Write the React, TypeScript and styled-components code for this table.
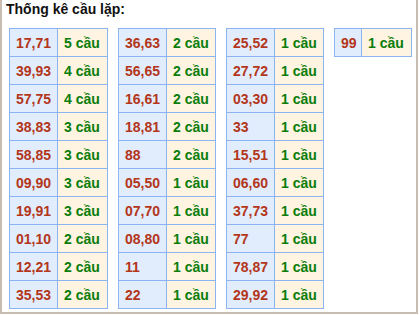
import React from 'react';
import styled, { createGlobalStyle } from 'styled-components';

const GlobalStyle = createGlobalStyle`
  html, body {
    margin: 0;
    padding: 0;
    background: #ffffff;
  }
  body {
    font-family: "Liberation Sans", Arial, sans-serif;
  }
`;

const Box = styled.div`
  box-sizing: border-box;
  width: 418px;
  height: 314px;
  border: 2px solid #c8bdb0;
  border-top: none;
  padding: 1px 0 0 4px;
`;

const Title = styled.div`
  font-size: 14px;
  line-height: 16px;
  font-weight: bold;
  color: #111;
`;

const Tables = styled.div`
  display: flex;
  align-items: flex-start;
  gap: 10px;
  margin: 11px 0 0 3px;
`;

const Grid = styled.div<{ $first: number; $second: number }>`
  display: grid;
  grid-template-columns: ${(p) => `${p.$first}px ${p.$second}px`};
  grid-auto-rows: 27px;
  gap: 1px;
  padding: 1px;
  background: #8db4f2;
`;

const Cell = styled.div<{ $kind: 'num' | 'count' }>`
  display: flex;
  align-items: center;
  padding-left: 6px;
  font-size: 14px;
  font-weight: bold;
  white-space: nowrap;
  background: ${(p) => (p.$kind === 'num' ? '#e1edfd' : '#fef4e1')};
  color: ${(p) => (p.$kind === 'num' ? '#b3361b' : '#0b7d0b')};
`;

type Row = [string, number];

const columns: { first: number; second: number; rows: Row[] }[] = [
  {
    first: 47,
    second: 49,
    rows: [
      ['17,71', 5], ['39,93', 4], ['57,75', 4], ['38,83', 3], ['58,85', 3],
      ['09,90', 3], ['19,91', 3], ['01,10', 2], ['12,21', 2], ['35,53', 2],
    ],
  },
  {
    first: 47,
    second: 48,
    rows: [
      ['36,63', 2], ['56,65', 2], ['16,61', 2], ['18,81', 2], ['88', 2],
      ['05,50', 1], ['07,70', 1], ['08,80', 1], ['11', 1], ['22', 1],
    ],
  },
  {
    first: 47,
    second: 48,
    rows: [
      ['25,52', 1], ['27,72', 1], ['03,30', 1], ['33', 1], ['15,51', 1],
      ['06,60', 1], ['37,73', 1], ['77', 1], ['78,87', 1], ['29,92', 1],
    ],
  },
  {
    first: 26,
    second: 49,
    rows: [['99', 1]],
  },
];

export default function App() {
  return (
    <>
      <GlobalStyle />
      <Box>
        <Title>Thống kê cầu lặp:</Title>
        <Tables>
          {columns.map((col, i) => (
            <Grid key={i} $first={col.first} $second={col.second}>
              {col.rows.map(([pair, n]) => (
                <React.Fragment key={pair}>
                  <Cell $kind="num">{pair}</Cell>
                  <Cell $kind="count">{n} cầu</Cell>
                </React.Fragment>
              ))}
            </Grid>
          ))}
        </Tables>
      </Box>
    </>
  );
}
